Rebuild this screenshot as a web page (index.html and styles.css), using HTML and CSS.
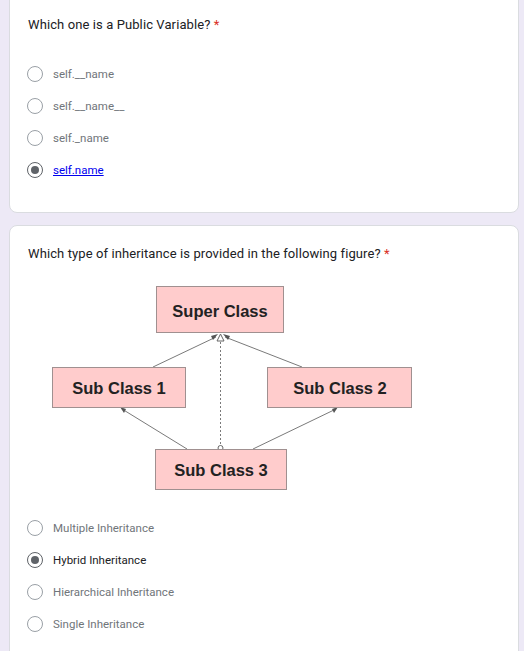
FILE: index.html
```html
<!DOCTYPE html>
<html>
<head>
<meta charset="utf-8">
<link rel="stylesheet" href="styles.css">
</head>
<body>
<div class="page">
  <section class="card card-first">
    <div class="question">Which one is a Public Variable? <span class="req">*</span></div>
    <ul class="options">
      <li class="option"><span class="radio"></span><span class="label">self.__name</span></li>
      <li class="option"><span class="radio"></span><span class="label">self.__name__</span></li>
      <li class="option"><span class="radio"></span><span class="label">self._name</span></li>
      <li class="option"><span class="radio checked"></span><a class="label link" href="#">self.name</a></li>
    </ul>
  </section>
  <section class="card card-second">
    <div class="question">Which type of inheritance is provided in the following figure? <span class="req">*</span></div>
    <svg class="diagram" width="380" height="210" viewBox="0 0 380 210" xmlns="http://www.w3.org/2000/svg">
      <g stroke="#7a7a7a" stroke-width="1" fill="none">
        <line x1="113" y1="85" x2="176" y2="55"/>
        <line x1="262" y1="85" x2="185" y2="55"/>
        <line x1="147" y1="167" x2="82" y2="127"/>
        <line x1="213" y1="167" x2="296" y2="127"/>
        <line x1="180.5" y1="60" x2="180.5" y2="164" stroke-dasharray="2 2"/>
      </g>
      <g fill="#555">
        <polygon points="178,52 171,54 173,58"/>
        <polygon points="183,52 190,54 188,58"/>
        <polygon points="80,125 86,127 84,131"/>
        <polygon points="298,125 292,127 294,131"/>
      </g>
      <polygon points="180.5,52 177,59 184,59" fill="#fff" stroke="#666" stroke-width="1"/>
      <circle cx="180.5" cy="166" r="2.5" fill="#fff" stroke="#666" stroke-width="1"/>
      <g fill="#ffcccc" stroke="#a09090" stroke-width="1">
        <rect x="116.5" y="4.5" width="127" height="46"/>
        <rect x="12.5" y="85.5" width="133" height="40"/>
        <rect x="227.5" y="85.5" width="144" height="40"/>
        <rect x="115.5" y="167.5" width="131" height="40"/>
      </g>
      <g class="box-text" text-anchor="middle">
        <text x="180" y="35">Super Class</text>
        <text x="79" y="112">Sub Class 1</text>
        <text x="300" y="112">Sub Class 2</text>
        <text x="181" y="194">Sub Class 3</text>
      </g>
    </svg>
    <ul class="options">
      <li class="option"><span class="radio"></span><span class="label">Multiple Inheritance</span></li>
      <li class="option"><span class="radio checked"></span><span class="label dark">Hybrid Inheritance</span></li>
      <li class="option"><span class="radio"></span><span class="label">Hierarchical Inheritance</span></li>
      <li class="option"><span class="radio"></span><span class="label">Single Inheritance</span></li>
    </ul>
  </section>
</div>
</body>
</html>
```

FILE: styles.css
```css
html, body {
  margin: 0;
  padding: 0;
  background: #ede9f6;
  height: 100%;
  overflow: hidden;
}

.page {
  padding: 0 5px 0 9px;
  display: flex;
  flex-direction: column;
  gap: 12px;
}

.card {
  background: #fff;
  border: 1px solid #dadce0;
  border-radius: 8px;
  padding: 0 18px;
  box-sizing: border-box;
  width: 510px;
}

.card-first {
  margin-top: -10px;
  padding-top: 24px;
  padding-bottom: 26px;
}

.card-second {
  padding-top: 18px;
  padding-bottom: 40px;
}

.question {
  font-family: Roboto, "Liberation Sans", sans-serif;
  font-size: 13px;
  line-height: 20px;
  color: #202124;
  letter-spacing: 0.1px;
}

.req {
  color: #d93025;
}

.options {
  list-style: none;
  margin: 23px 0 0 -1px;
  padding: 0;
}

.card-second .options {
  margin-top: 20px;
}

.option {
  display: flex;
  align-items: center;
  height: 32px;
}

.radio {
  width: 16px;
  height: 16px;
  box-sizing: border-box;
  border: 1.5px solid #9aa0a6;
  border-radius: 50%;
  display: flex;
  align-items: center;
  justify-content: center;
  flex: none;
}

.radio.checked {
  border-color: #5f6368;
}

.radio.checked::after {
  content: "";
  width: 8px;
  height: 8px;
  border-radius: 50%;
  background: #5f6368;
}

.label {
  margin-left: 10px;
  font-family: Roboto, "Liberation Sans", sans-serif;
  font-size: 11.5px;
  color: #70757a;
}

.label.dark {
  color: #202124;
}

.link {
  color: #0000ee;
  text-decoration: underline;
}

.diagram {
  display: block;
  margin: 18px 0 0 12px;
}

.box-text {
  font-family: "Liberation Sans", Arial, sans-serif;
  font-weight: bold;
  font-size: 16.5px;
  fill: #222;
}
```
